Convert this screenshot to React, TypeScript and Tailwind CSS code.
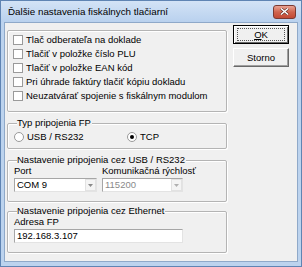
import React from "react";

const ui = { fontFamily: '"Liberation Sans", Arial, sans-serif' };

function CheckRow({ label }: { label: string }) {
  return (
    <div className="flex h-[14px] items-center">
      <span className="mr-[3px] h-[10px] w-[10px] border border-[#9a9a9a] bg-white" />
      <span>{label}</span>
    </div>
  );
}

function Radio({ label, checked }: { label: string; checked?: boolean }) {
  return (
    <div className="flex items-center">
      <span className="mr-[3px] flex h-[10px] w-[10px] items-center justify-center rounded-full border border-[#9a9a9a] bg-white">
        {checked && <span className="h-[4px] w-[4px] rounded-full bg-black" />}
      </span>
      <span>{label}</span>
    </div>
  );
}

function Group({
  title,
  className,
  children,
}: {
  title?: string;
  className: string;
  children: React.ReactNode;
}) {
  return (
    <fieldset
      className={
        "rounded-[2px] border border-[#b4b4b4] shadow-[inset_1px_1px_0_#fff,1px_1px_0_#fff] " +
        className
      }
    >
      {title && (
        <legend className="ml-[3px] bg-[#f0f0f0] pr-[1px] leading-[10px]">{title}</legend>
      )}
      {children}
    </fieldset>
  );
}

function Combo({ value, disabled, className }: { value: string; disabled?: boolean; className: string }) {
  return (
    <div
      className={
        "flex h-[14px] items-center border border-[#a6a6a6] border-b-[#e3e3e3] border-r-[#e3e3e3] bg-white " +
        className
      }
    >
      <span className={"flex-1 pl-[2px] " + (disabled ? "text-[#8a8a8a]" : "text-black")}>{value}</span>
      <span className="flex h-[12px] w-[11px] items-center justify-center border border-[#e2e2e2] bg-[#f4f4f4]">
        <svg width="5" height="3" viewBox="0 0 5 3">
          <path d="M0 0h5L2.5 3z" fill={disabled ? "#b0b0b0" : "#8a8a8a"} />
        </svg>
      </span>
    </div>
  );
}

function Button({ label, isDefault }: { label: React.ReactNode; isDefault?: boolean }) {
  return (
    <div
      className={
        "flex h-[19px] w-[56px] items-center justify-center bg-[#f0f0f0] " +
        (isDefault
          ? "border border-black shadow-[inset_1px_1px_0_#fff,inset_-1px_-1px_0_#696969]"
          : "border border-white border-b-[#696969] border-r-[#696969] shadow-[inset_-1px_-1px_0_#a0a0a0]")
      }
    >
      {isDefault ? (
        <span className="flex h-[13px] w-[48px] items-center justify-center border border-dotted border-[#555]">
          {label}
        </span>
      ) : (
        label
      )}
    </div>
  );
}

export default function App() {
  return (
    <div
      style={ui}
      className="flex h-[267px] w-[302px] flex-col border border-[#5f84b3] bg-[#bcd3ee] text-[9.5px] leading-[10px] text-black"
    >
      {/* title bar */}
      <div className="flex h-[21px] shrink-0 items-center bg-gradient-to-b from-[#d3e3f6] to-[#b9d1ee] pl-[7px] pr-[5px]">
        <span className="flex-1 text-[9.8px]">Ďalšie nastavenia fiskálnych tlačiarní</span>
        <div className="flex h-[14px] w-[23px] items-center justify-center rounded-[3px] border border-[#7a3a32] bg-gradient-to-b from-[#e8a394] via-[#d0644e] to-[#c24a35]">
          <svg width="9" height="7" viewBox="0 0 9 7">
            <path d="M1 0.5l7 6M8 0.5l-7 6" stroke="#5a2a22" strokeWidth="2.6" />
            <path d="M1 0.5l7 6M8 0.5l-7 6" stroke="#fff" strokeWidth="1.5" />
          </svg>
        </div>
      </div>

      {/* client area */}
      <div className="mx-[3px] mb-[4px] flex flex-1 border border-[#8fa9c9] bg-[#f0f0f0]">
        <div className="ml-[2px] flex w-[220px] flex-col">
          <Group className="mt-[7px] h-[82px] pl-[5px] pt-[2px]">
            <CheckRow label="Tlač odberateľa na doklade" />
            <CheckRow label="Tlačiť v položke číslo PLU" />
            <CheckRow label="Tlačiť v položke EAN kód" />
            <CheckRow label="Pri úhrade faktúry tlačiť kópiu dokladu" />
            <CheckRow label="Neuzatvárať spojenie s fiskálnym modulom" />
          </Group>

          <Group title="Typ pripojenia FP" className="mt-[6px] h-[31px] pl-[6px] pt-[4px]">
            <div className="flex">
              <div className="w-[113px]">
                <Radio label="USB / RS232" />
              </div>
              <Radio label="TCP" checked />
            </div>
          </Group>

          <Group
            title="Nastavenie pripojenia cez USB / RS232"
            className="mt-[6px] h-[47px] pl-[6px]"
          >
            <div className="flex gap-[5px]">
              <div className="flex w-[83px] flex-col">
                <span className="h-[13px] pt-[1px]">Port</span>
                <Combo value="COM 9" className="w-[83px]" />
              </div>
              <div className="flex flex-col">
                <span className="h-[13px] pt-[1px]">Komunikačná rýchlosť</span>
                <Combo value="115200" disabled className="w-[81px]" />
              </div>
            </div>
          </Group>

          <Group
            title="Nastavenie pripojenia cez Ethernet"
            className="mt-[4px] h-[47px] pl-[6px]"
          >
            <span className="block h-[13px] pt-[1px]">Adresa FP</span>
            <div className="flex h-[14px] w-[169px] items-center border border-[#a6a6a6] border-b-[#e3e3e3] border-r-[#e3e3e3] bg-white pl-[2px]">
              192.168.3.107
            </div>
          </Group>
        </div>

        <div className="ml-[6px] mt-[2px] flex flex-col gap-[4px]">
          <Button
            isDefault
            label={
              <span>
                <span className="underline">O</span>K
              </span>
            }
          />
          <Button label="Storno" />
        </div>
      </div>
    </div>
  );
}
